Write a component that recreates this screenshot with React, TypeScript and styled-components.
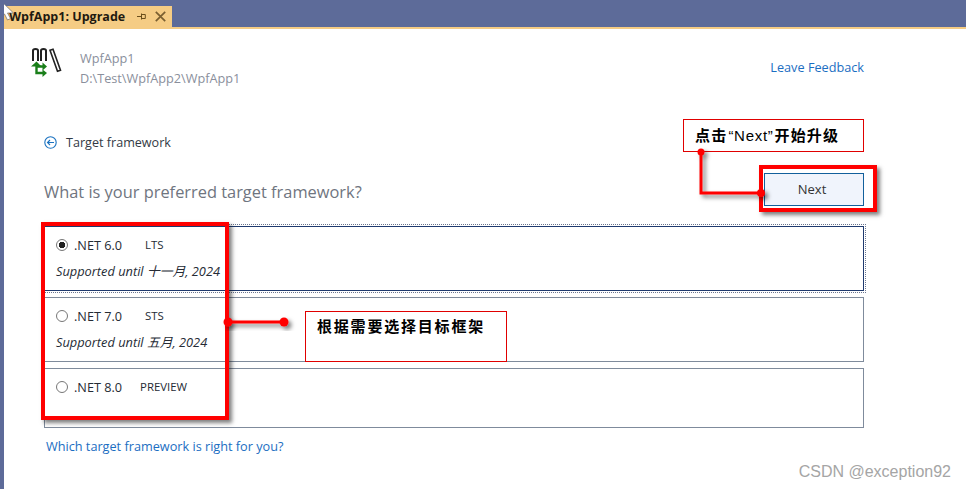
import React from "react";
import styled, { createGlobalStyle } from "styled-components";

const GlobalStyle = createGlobalStyle`
  html, body {
    margin: 0;
    padding: 0;
    background: #fff;
    overflow: hidden;
  }
  body {
    font-family: "Open Sans", "Noto Sans CJK SC", sans-serif;
  }
`;

const frameworks = [
  { id: "6", name: ".NET 6.0", tag: "LTS", tagGap: 23, support: "Supported until 十一月, 2024", selected: true, height: 65 },
  { id: "7", name: ".NET 7.0", tag: "STS", tagGap: 23, support: "Supported until 五月, 2024", selected: false, height: 65 },
  { id: "8", name: ".NET 8.0", tag: "PREVIEW", tagGap: 18, support: "", selected: false, height: 60 },
];

export default function App() {
  return (
    <Page>
      <GlobalStyle />
      <TitleBar>
        <Tab>
          <TabTitle>WpfApp1: Upgrade</TabTitle>
          <PinIcon width="9" height="7" viewBox="0 0 9 7">
            <path d="M0 3.5h4M4.5 .5v6M4.5 1.5h3.8v4H4.5" stroke="#6b4f1c" fill="none" strokeWidth="1" />
          </PinIcon>
          <CloseIcon width="11" height="11" viewBox="0 0 11 11">
            <path d="M.8.8l9.4 9.4M10.2.8L.8 10.2" stroke="#7a5f30" fill="none" strokeWidth="1.7" />
          </CloseIcon>
        </Tab>
      </TitleBar>

      <Main>
        <ProjectHeader>
          <ProjectIcon width="40" height="36" viewBox="0 0 40 36">
            <g fill="none" stroke="#222" strokeWidth="2">
              <path d="M7 17V6.5q0-1.5 2.5-1.5t2.5 1.5V17" />
              <path d="M15 17V6.5q0-1.5 2.5-1.5t2.5 1.5V17" />
            </g>
            <path d="M24 6.2l3-1 7.5 21-3 1z" fill="none" stroke="#222" strokeWidth="1.6" />
            <g fill="none" stroke="#1a7f1a" strokeWidth="2.4">
              <path d="M10.5 21v8h7M10.5 22.5h7" />
            </g>
            <g fill="#1a7f1a">
              <path d="M5 22.5l5.5-5 5 5z" />
              <path d="M16.5 18.5l4.5 4-4.5 4z" />
              <path d="M16.5 25.5l4.5 3.5-4.5 4z" />
            </g>
          </ProjectIcon>
          <ProjectMeta>
            <ProjectText>WpfApp1</ProjectText>
            <ProjectText>D:\Test\WpfApp2\WpfApp1</ProjectText>
          </ProjectMeta>
          <FeedbackLink>Leave Feedback</FeedbackLink>
        </ProjectHeader>

        <StepRow>
          <BackIcon width="13" height="13" viewBox="0 0 13 13">
            <circle cx="6.5" cy="6.5" r="5.7" fill="none" stroke="#1b72c0" strokeWidth="1.1" />
            <path d="M10 6.5H3.5M6 4L3.5 6.5 6 9" fill="none" stroke="#1b72c0" strokeWidth="1.1" />
          </BackIcon>
          <StepLabel>Target framework</StepLabel>
        </StepRow>

        <QuestionRow>
          <Question>What is your preferred target framework?</Question>
          <NextButton>Next</NextButton>
        </QuestionRow>

        <CardList>
          {frameworks.map((fw) => (
            <Card key={fw.id} $selected={fw.selected} $height={fw.height}>
              <CardTop>
                <Radio $selected={fw.selected} />
                <FrameworkName>{fw.name}</FrameworkName>
                <Tag $gap={fw.tagGap}>{fw.tag}</Tag>
              </CardTop>
              {fw.support && <Support>{fw.support}</Support>}
            </Card>
          ))}
        </CardList>

        <HelpLink>Which target framework is right for you?</HelpLink>
      </Main>

      <NextHighlight />
      <ListHighlight />
      <Callout1>
        点击<CalloutLatin>“Next”</CalloutLatin>开始升级
      </Callout1>
      <Callout2>根据需要选择目标框架</Callout2>

      <Connectors width="966" height="489" viewBox="0 0 966 489">
        <defs>
          <filter id="sh" x="-30%" y="-30%" width="180%" height="180%">
            <feDropShadow dx="3" dy="3" stdDeviation="2" floodColor="#000" floodOpacity="0.5" />
          </filter>
        </defs>
        <g filter="url(#sh)" fill="#f00" stroke="none">
          <path d="M701 152V193H761" fill="none" stroke="#f00" strokeWidth="3" />
          <circle cx="701" cy="152" r="3.5" />
          <circle cx="761" cy="193" r="4" />
        </g>
        <g filter="url(#sh)" fill="#f00">
          <path d="M228 322H284" fill="none" stroke="#f00" strokeWidth="3" />
          <circle cx="228" cy="322" r="4.5" />
          <circle cx="284" cy="322" r="4.5" />
        </g>
      </Connectors>

      <Cursor width="15" height="21" viewBox="0 0 15 21">
        <path d="M0 0v18l4.5-4 3 6 3-1.5-3-5.5h6z" fill="#fff" stroke="#555" strokeWidth=".6" />
      </Cursor>

      <Watermark>CSDN @exception92</Watermark>
    </Page>
  );
}

const Page = styled.div`
  position: relative;
  width: 966px;
  height: 489px;
  overflow: hidden;
  background: #fff;
  border-left: 4px solid #5d6b99;
  box-sizing: border-box;
`;

const TitleBar = styled.div`
  display: flex;
  align-items: flex-end;
  height: 27px;
  background: #5d6b99;
  border-bottom: 2px solid #f5cc84;
`;

const Tab = styled.div`
  display: flex;
  align-items: center;
  width: 168px;
  height: 21px;
  box-sizing: border-box;
  padding-left: 5px;
  background: #f5cc84;
`;

const TabTitle = styled.span`
  font-size: 12.5px;
  font-weight: 700;
  color: #1f1a10;
  white-space: nowrap;
`;

const PinIcon = styled.svg`
  margin-left: 12px;
`;

const CloseIcon = styled.svg`
  margin-left: 9px;
`;

const Main = styled.div`
  display: flex;
  flex-direction: column;
  padding: 17px 102px 0 40px;
`;

const ProjectHeader = styled.div`
  display: flex;
  align-items: flex-start;
  height: 44px;
`;

const ProjectIcon = styled.svg`
  flex: none;
  margin: -2px 0 0 -18px;
`;

const ProjectMeta = styled.div`
  display: flex;
  flex-direction: column;
  gap: 2px;
  margin: 3px 0 0 14px;
`;

const ProjectText = styled.span`
  font-size: 12.7px;
  line-height: 18px;
  color: #8a8f9c;
`;

const FeedbackLink = styled.span`
  margin: 12px 0 0 auto;
  font-size: 12.7px;
  line-height: 18px;
  color: #1b6ec2;
`;

const StepRow = styled.div`
  display: flex;
  align-items: center;
  gap: 9px;
  margin-top: 43px;
  height: 18px;
`;

const BackIcon = styled.svg`
  flex: none;
`;

const StepLabel = styled.span`
  font-size: 12.6px;
  color: #333a45;
`;

const QuestionRow = styled.div`
  display: flex;
  align-items: center;
  justify-content: space-between;
  margin-top: 22px;
  height: 33px;
`;

const Question = styled.span`
  padding-top: 3px;
  font-size: 16.4px;
  color: #6f7580;
`;

const NextButton = styled.button`
  width: 100px;
  height: 33px;
  padding: 0 4px 2px 0;
  border: 1px solid #12609c;
  background: #f0f4fc;
  color: #333;
  font-family: inherit;
  font-size: 13px;
`;

const CardList = styled.div`
  display: flex;
  flex-direction: column;
  gap: 6px;
  margin-top: 20px;
`;

const Card = styled.div<{ $selected: boolean; $height: number }>`
  box-sizing: border-box;
  height: ${(p) => p.$height}px;
  padding: 8px 0 0 11px;
  border: 1px solid ${(p) => (p.$selected ? "#1f3a6e" : "#7f8b9c")};
  outline: ${(p) => (p.$selected ? "1px dotted #6b7690" : "none")};
  outline-offset: 1px;
`;

const CardTop = styled.div`
  display: flex;
  align-items: center;
  height: 20px;
`;

const Radio = styled.span<{ $selected: boolean }>`
  flex: none;
  width: 12px;
  height: 12px;
  box-sizing: border-box;
  border: 1px solid #777;
  border-radius: 50%;
  background: ${(p) =>
    p.$selected ? "radial-gradient(circle, #222 0 3px, transparent 3.5px)" : "#fff"};
`;

const FrameworkName = styled.span`
  margin-left: 6px;
  font-size: 12.7px;
  color: #252b35;
`;

const Tag = styled.span<{ $gap: number }>`
  margin-left: ${(p) => p.$gap}px;
  padding-bottom: 1px;
  font-size: 11.4px;
  color: #252b35;
`;

const Support = styled.div`
  margin-top: 7px;
  font-size: 12.8px;
  line-height: 18px;
  font-style: italic;
  color: #252b35;
`;

const HelpLink = styled.span`
  margin: 9px 0 0 2px;
  font-size: 12.7px;
  line-height: 18px;
  color: #1b6ec2;
`;

const Highlight = styled.div`
  position: absolute;
  box-sizing: border-box;
  border: 4px solid #f00;
  box-shadow: 3px 3px 4px rgba(0, 0, 0, 0.5);
`;

const NextHighlight = styled(Highlight)`
  left: 755px;
  top: 165px;
  width: 118px;
  height: 47px;
`;

const ListHighlight = styled(Highlight)`
  left: 37px;
  top: 222px;
  width: 188px;
  height: 198px;
`;

const Callout = styled.div`
  position: absolute;
  box-sizing: border-box;
  padding-left: 11px;
  border: 1px solid #e00000;
  background: #fff;
  color: #000;
  font-family: "Noto Sans CJK SC", sans-serif;
  font-size: 15px;
  font-weight: 700;
  white-space: nowrap;
`;

const CalloutLatin = styled.span`
  margin: 0 1px;
  font-family: "Liberation Sans", sans-serif;
  font-weight: 400;
  font-size: 15px;
  letter-spacing: 0.7px;
`;

const Callout1 = styled(Callout)`
  left: 679px;
  top: 119px;
  width: 181px;
  height: 33px;
  line-height: 30px;
  letter-spacing: 1.2px;
`;

const Callout2 = styled(Callout)`
  left: 301px;
  top: 311px;
  width: 202px;
  height: 51px;
  line-height: 28px;
  letter-spacing: 1.8px;
`;

const Connectors = styled.svg`
  position: absolute;
  left: -4px;
  top: 0;
  pointer-events: none;
`;

const Cursor = styled.svg`
  position: absolute;
  left: -4px;
  top: 0;
`;

const Watermark = styled.span`
  position: absolute;
  right: 15px;
  top: 463px;
  font-family: "Liberation Sans", sans-serif;
  font-size: 16px;
  color: #a5a5a5;
`;
